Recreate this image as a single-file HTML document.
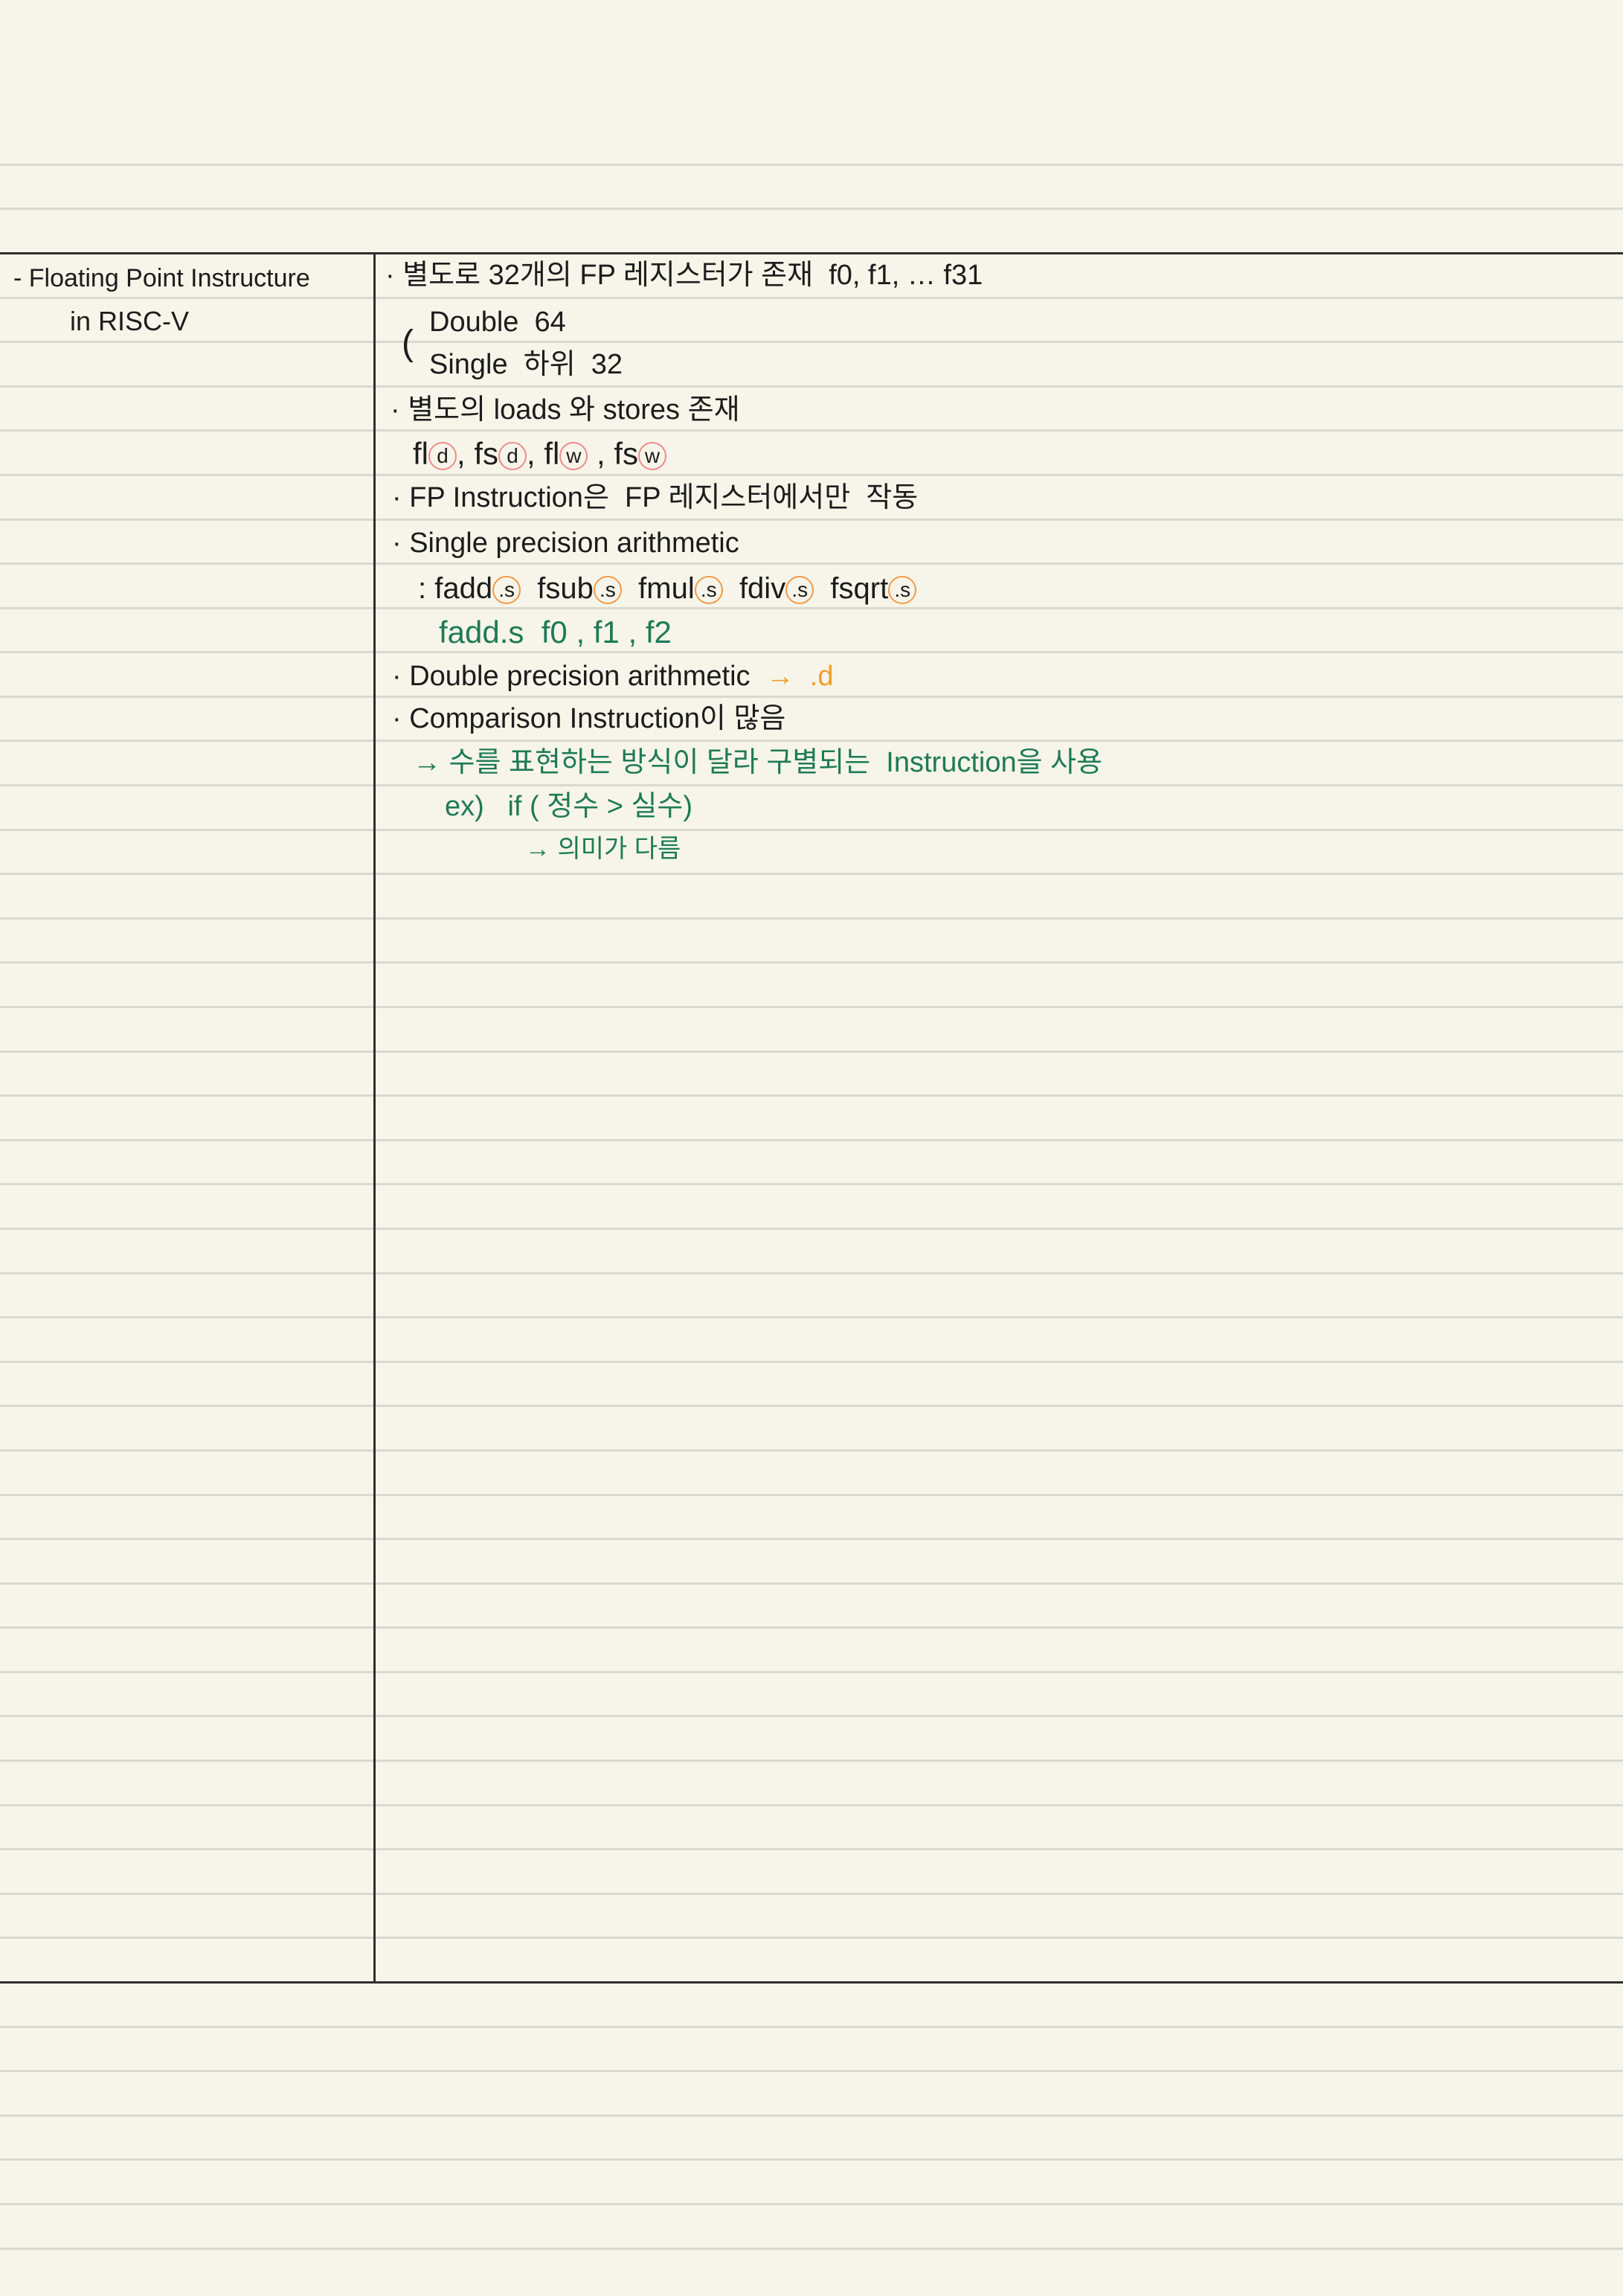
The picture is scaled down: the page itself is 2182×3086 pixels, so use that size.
<!DOCTYPE html>
<html><head><meta charset="utf-8"><style>
html,body{margin:0;padding:0}
body{width:2182px;height:3086px;background:#f7f5e9;position:relative;overflow:hidden;
font-family:"Liberation Sans","Noto Sans CJK KR",sans-serif;color:#1c1c1c}
.g{position:absolute;left:0;width:2182px;height:3px;background:#d9d9d3}
.d{position:absolute;left:0;width:2182px;height:3px;background:#2e2e2e}
.v{position:absolute;left:502px;top:340px;width:3px;height:2326px;background:#2e2e2e}
.t{position:absolute;line-height:60px;height:60px;white-space:nowrap;font-size:38px;transform-origin:left center}
.gr{color:#1e7a57}.or{color:#f0a02c}
.c{display:inline-block;border:2px solid #f29a4a;border-radius:50%;width:34px;height:34px;line-height:34px;text-align:center;font-size:28px;vertical-align:middle}
.p{border-color:#f08a8a}
</style></head><body>
<div id="lines"></div>
<script>
var h='';for(var k=0;k<48;k++){var y=Math.round(220.8+k*59.59);if(y>3086)break;var dk=(y>=338&&y<=342)||(y>=2662&&y<=2667);h+='<div class="'+(dk?'d':'g')+'" style="top:'+(y-1)+'px"></div>';}
document.getElementById('lines').innerHTML=h;
</script>
<div class="d" style="top:339px"></div>
<div class="d" style="top:2663px"></div>
<div class="v"></div>

<div class="t" style="left:18px;top:344px;font-size:34px">- Floating Point Instructure</div>
<div class="t" style="left:94px;top:402px;font-size:36px">in RISC-V</div>

<div class="t" style="left:518px;top:340px">· 별도로 32개의 FP 레지스터가 존재 &nbsp;f0, f1, … f31</div>
<div class="t" style="left:540px;top:432px;font-size:48px">(</div>
<div class="t" style="left:577px;top:403px">Double &nbsp;64</div>
<div class="t" style="left:577px;top:460px">Single &nbsp;하위 &nbsp;32</div>
<div class="t" style="left:525px;top:521px">· 별도의 loads 와 stores 존재</div>
<div class="t" style="left:555px;top:580px;font-size:42px">fl<span class="c p">d</span>, fs<span class="c p">d</span>, fl<span class="c p">w</span> , fs<span class="c p">w</span></div>
<div class="t" style="left:527px;top:639px">· FP Instruction은 &nbsp;FP 레지스터에서만 &nbsp;작동</div>
<div class="t" style="left:527px;top:700px">· Single precision arithmetic</div>
<div class="t" style="left:562px;top:761px;font-size:40px">: fadd<span class="c">.s</span> &nbsp;fsub<span class="c">.s</span> &nbsp;fmul<span class="c">.s</span> &nbsp;fdiv<span class="c">.s</span> &nbsp;fsqrt<span class="c">.s</span></div>
<div class="t gr" style="left:590px;top:820px;font-size:42px">fadd.s &nbsp;f0 , f1 , f2</div>
<div class="t" style="left:527px;top:879px">· Double precision arithmetic &nbsp;<span class="or">→ &nbsp;.d</span></div>
<div class="t" style="left:527px;top:936px">· Comparison Instruction이 많음</div>
<div class="t gr" style="left:555px;top:995px">→ 수를 표현하는 방식이 달라 구별되는 &nbsp;Instruction을 사용</div>
<div class="t gr" style="left:598px;top:1054px">ex) &nbsp;&nbsp;if ( 정수 &gt; 실수)</div>
<div class="t gr" style="left:706px;top:1111px;font-size:34px">→ 의미가 다름</div>
</body></html>
